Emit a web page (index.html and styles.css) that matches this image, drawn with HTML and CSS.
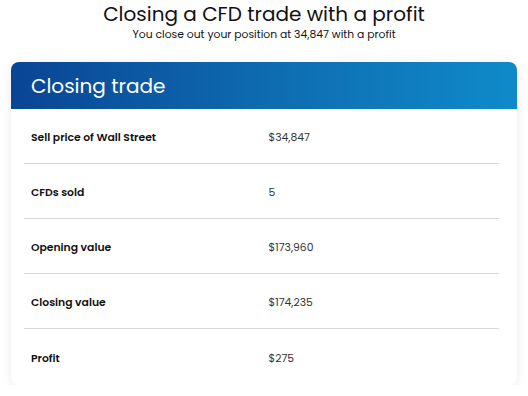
FILE: index.html
```html
<!DOCTYPE html>
<html>
<head>
<meta charset="utf-8">
<link rel="stylesheet" href="styles.css">
</head>
<body>
<header class="intro">
  <h1 class="title">Closing a CFD trade with a profit</h1>
  <p class="subtitle">You close out your position at 34,847 with a profit</p>
</header>
<section class="card">
  <h2 class="card-head">Closing trade</h2>
  <div class="rows">
    <div class="row"><span class="label">Sell price of Wall Street</span><span class="value">$34,847</span></div>
    <div class="row"><span class="label">CFDs sold</span><span class="value">5</span></div>
    <div class="row"><span class="label">Opening value</span><span class="value">$173,960</span></div>
    <div class="row"><span class="label">Closing value</span><span class="value">$174,235</span></div>
    <div class="row"><span class="label">Profit</span><span class="value">$275</span></div>
  </div>
</section>
</body>
</html>
```
FILE: styles.css
```css
* { box-sizing: border-box; }
body {
  margin: 0;
  background: #ffffff;
  font-family: "Poppins", "Inter", "Liberation Sans", sans-serif;
  color: #111;
}
.intro {
  text-align: center;
  padding-top: 2px;
  height: 62px;
}
.title {
  margin: 0;
  font-size: 20px;
  font-weight: 400;
  line-height: 24px;
  color: #111;
}
.subtitle {
  margin: 2px 0 0;
  font-size: 10.8px;
  line-height: 14px;
  color: #111;
}
.card {
  margin: 0 11px;
  width: 506px;
  background: #fff;
  border-radius: 8px;
  box-shadow: 0 2px 12px rgba(0,0,0,0.08);
  overflow: hidden;
}
.card-head {
  margin: 0;
  height: 47px;
  padding-left: 20px;
  padding-top: 1px;
  display: flex;
  align-items: center;
  font-size: 20px;
  font-weight: 400;
  color: #fff;
  background: linear-gradient(90deg, #0a4595 0%, #0e6bb0 50%, #0f8ac9 100%);
}
.rows {
  padding: 0 18px 0 13px;
}
.row {
  display: grid;
  grid-template-columns: 1fr 1fr;
  align-items: center;
  height: 55px;
  padding-top: 3px;
  border-bottom: 1px solid #d6d6d6;
  font-size: 10.8px;
}
.row:last-child {
  border-bottom: none;
  height: 56px;
}
.label {
  padding-left: 7px;
  font-weight: 600;
  color: #111;
}
.value {
  padding-left: 7px;
  color: #333;
}
```
